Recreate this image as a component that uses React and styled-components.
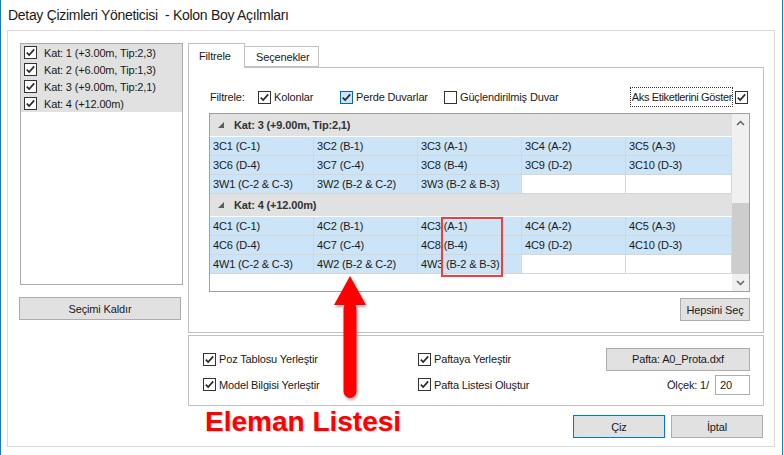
import React from 'react';
import styled, { createGlobalStyle } from 'styled-components';

const GlobalStyle = createGlobalStyle`
  html, body { margin: 0; padding: 0; background: #fff; }
  body {
    font-family: "Liberation Sans", Arial, sans-serif;
    font-size: 11px;
    letter-spacing: -0.15px;
    color: #000;
  }
`;

const floors = [
  'Kat: 1 (+3.00m, Tip:2,3)',
  'Kat: 2 (+6.00m, Tip:1,3)',
  'Kat: 3 (+9.00m, Tip:2,1)',
  'Kat: 4 (+12.00m)',
];

const groups = [
  {
    title: 'Kat: 3 (+9.00m, Tip:2,1)',
    items: ['3C1 (C-1)', '3C2 (B-1)', '3C3 (A-1)', '3C4 (A-2)', '3C5 (A-3)',
      '3C6 (D-4)', '3C7 (C-4)', '3C8 (B-4)', '3C9 (D-2)', '3C10 (D-3)',
      '3W1 (C-2 & C-3)', '3W2 (B-2 & C-2)', '3W3 (B-2 & B-3)', '', ''],
  },
  {
    title: 'Kat: 4 (+12.00m)',
    items: ['4C1 (C-1)', '4C2 (B-1)', '4C3 (A-1)', '4C4 (A-2)', '4C5 (A-3)',
      '4C6 (D-4)', '4C7 (C-4)', '4C8 (B-4)', '4C9 (D-2)', '4C10 (D-3)',
      '4W1 (C-2 & C-3)', '4W2 (B-2 & C-2)', '4W3 (B-2 & B-3)', '', ''],
  },
];

const Check = ({ checked, hover }) => (
  <CheckBox $hover={hover}>
    {checked && (
      <svg width="11" height="11" viewBox="0 0 11 11">
        <path d="M1.8 5.6 L4.2 8.1 L9.2 2.4" fill="none" stroke="#2b2b2b" strokeWidth="1.7" />
      </svg>
    )}
  </CheckBox>
);

const App = () => {
  return (
    <Window>
      <GlobalStyle />
      <TitleBar>Detay Çizimleri Yöneticisi  - Kolon Boy Açılmları</TitleBar>
      <Panel>
        <LeftColumn>
          <FloorList>
            {floors.map((f) => (
              <FloorItem key={f}>
                <Check checked />
                <span>{f}</span>
              </FloorItem>
            ))}
          </FloorList>
          <Button $w="162px" $offset="-1px">Seçimi Kaldır</Button>
        </LeftColumn>

        <RightColumn>
          <TabStrip>
            <Tab $active>Filtrele</Tab>
            <Tab>Seçenekler</Tab>
          </TabStrip>
          <TabPage>
            <FilterRow>
              <FilterLabel>Filtrele:</FilterLabel>
              <CheckItem $w="82px"><Check checked />Kolonlar</CheckItem>
              <CheckItem $w="104px"><Check checked hover />Perde Duvarlar</CheckItem>
              <CheckItem><Check />Güçlendirilmiş Duvar</CheckItem>
              <AksItem>
                <FocusText>Aks Etiketlerini Göster</FocusText>
                <Check checked />
              </AksItem>
            </FilterRow>

            <Grid>
              <GridBody>
                {groups.map((g) => (
                  <React.Fragment key={g.title}>
                    <GroupHeader>
                      <svg width="6" height="6" viewBox="0 0 6 6">
                        <polygon points="6,0 6,6 0,6" fill="#5c5c5c" />
                      </svg>
                      <span>{g.title}</span>
                    </GroupHeader>
                    <CellGrid>
                      {g.items.map((it, i) => (
                        <Cell key={i} $empty={!it}>{it}</Cell>
                      ))}
                    </CellGrid>
                  </React.Fragment>
                ))}
              </GridBody>
              <ScrollBar>
                <ScrollButton>
                  <svg width="9" height="6" viewBox="0 0 9 6">
                    <path d="M1 5 L4.5 1.5 L8 5" fill="none" stroke="#606060" strokeWidth="1.5" />
                  </svg>
                </ScrollButton>
                <ScrollTrack>
                  <ScrollThumb />
                </ScrollTrack>
                <ScrollButton>
                  <svg width="9" height="6" viewBox="0 0 9 6">
                    <path d="M1 1 L4.5 4.5 L8 1" fill="none" stroke="#606060" strokeWidth="1.5" />
                  </svg>
                </ScrollButton>
              </ScrollBar>
            </Grid>

            <PageButtons>
              <Button $w="70px">Hepsini Seç</Button>
            </PageButtons>
          </TabPage>

          <GroupBox>
            <CheckItem><Check checked />Poz Tablosu Yerleştir</CheckItem>
            <CheckItem><Check checked />Paftaya Yerleştir</CheckItem>
            <Button $w="144px">Pafta: A0_Prota.dxf</Button>
            <CheckItem><Check checked />Model Bilgisi Yerleştir</CheckItem>
            <CheckItem><Check checked />Pafta Listesi Oluştur</CheckItem>
            <ScaleRow>
              <span>Ölçek: 1/</span>
              <TextInput>20</TextInput>
            </ScaleRow>
          </GroupBox>

          <DialogButtons>
            <Button $w="92px" $default>Çiz</Button>
            <Button $w="92px">İptal</Button>
          </DialogButtons>
        </RightColumn>
      </Panel>

      <Highlight />
      <Arrow viewBox="0 0 40 130" width="40" height="130">
        <defs>
          <filter id="sh" x="-50%" y="-20%" width="200%" height="140%">
            <feDropShadow dx="1" dy="2" stdDeviation="1.5" floodColor="#000" floodOpacity="0.35" />
          </filter>
        </defs>
        <g filter="url(#sh)">
          <polygon points="20,2 36,31 4,31" fill="#ff0000" />
          <rect x="13.5" y="28" width="13" height="96" rx="6.5" fill="#ff0000" />
        </g>
      </Arrow>
      <Label>Eleman Listesi</Label>
    </Window>
  );
};

export default App;

const Window = styled.div`
  position: relative;
  width: 781px;
  height: 455px;
  border-left: 1px solid #1979ca;
  border-right: 1px solid #1979ca;
  background: #fff;
  overflow: hidden;
`;

const TitleBar = styled.div`
  height: 30px;
  padding-left: 7px;
  display: flex;
  align-items: center;
  font-size: 14px;
  letter-spacing: -0.3px;
  color: #1a1a1a;
  white-space: pre;
`;

const Panel = styled.div`
  margin-left: 6px;
  width: 768px;
  height: 417px;
  border: 1px solid #dadada;
  padding: 12px 0 0 12px;
  box-sizing: border-box;
  display: flex;
  gap: 5px;
`;

const LeftColumn = styled.div`
  width: 163px;
  display: flex;
  flex-direction: column;
`;

const FloorList = styled.div`
  height: 242px;
  border: 1px solid #ababab;
  box-sizing: border-box;
  background: #fff;
`;

const FloorItem = styled.div`
  height: 17px;
  display: flex;
  align-items: center;
  gap: 7px;
  padding-left: 3px;
  background: #e1e1e1;
  color: #1a1a1a;
`;

const CheckBox = styled.span`
  width: 13px;
  height: 13px;
  box-sizing: border-box;
  border: 1px solid ${(p) => (p.$hover ? '#0a64ad' : '#333')};
  background: ${(p) => (p.$hover ? '#cce4f7' : '#fff')};
  display: inline-flex;
  align-items: center;
  justify-content: center;
  flex: none;
`;

const Button = styled.div`
  width: ${(p) => p.$w};
  margin-left: ${(p) => p.$offset || '0'};
  height: 23px;
  box-sizing: border-box;
  border: 1px solid ${(p) => (p.$default ? '#0078d7' : '#adadad')};
  background: #e1e1e1;
  display: flex;
  align-items: center;
  justify-content: center;
  color: #1a1a1a;
  ${LeftColumn} & {
    margin-top: 12px;
  }
`;

const RightColumn = styled.div`
  width: 576px;
  display: flex;
  flex-direction: column;
`;

const TabStrip = styled.div`
  display: flex;
  height: 24px;
  align-items: flex-end;
  position: relative;
  z-index: 1;
`;

const Tab = styled.div`
  box-sizing: border-box;
  height: ${(p) => (p.$active ? '25px' : '21px')};
  margin-bottom: ${(p) => (p.$active ? '-1px' : '0')};
  padding: 0 ${(p) => (p.$active ? '10px' : '11px')};
  border: 1px solid #c2c2c2;
  border-bottom: ${(p) => (p.$active ? 'none' : '1px solid #c2c2c2')};
  border-left: ${(p) => (p.$active ? '1px solid #c2c2c2' : 'none')};
  background: #fff;
  display: flex;
  align-items: ${(p) => (p.$active ? 'flex-start' : 'center')};
  padding-top: ${(p) => (p.$active ? '6px' : '0')};
  color: #1a1a1a;
  width: ${(p) => (p.$active ? '57px' : '74px')};
`;

const TabPage = styled.div`
  height: 266px;
  box-sizing: border-box;
  border: 1px solid #c2c2c2;
  padding: 20px 13px 0 20px;
  display: flex;
  flex-direction: column;
`;

const FilterRow = styled.div`
  height: 18px;
  display: flex;
  align-items: center;
  padding-left: 1px;
  padding-right: 2px;
  color: #1a1a1a;
`;

const FilterLabel = styled.span`
  width: 48px;
`;

const CheckItem = styled.div`
  ${(p) => (p.$w ? `width: ${p.$w};` : '')}
  display: flex;
  align-items: center;
  gap: 3px;
  white-space: nowrap;
  color: #1a1a1a;
`;

const AksItem = styled.div`
  margin-left: auto;
  display: flex;
  align-items: center;
  gap: 3px;
`;

const FocusText = styled.span`
  outline: 1px dotted #333;
  padding: 2px 0 2px 1px;
  line-height: 14px;
  letter-spacing: -0.35px;
`;

const Grid = styled.div`
  margin-top: 7px;
  height: 179px;
  box-sizing: border-box;
  border: 1px solid #a0a0a0;
  display: flex;
  background: #fff;
`;

const GridBody = styled.div`
  flex: 1;
  display: flex;
  flex-direction: column;
`;

const GroupHeader = styled.div`
  height: 22px;
  border-bottom: 1px solid #fff;
  background: #e1e1e1;
  display: flex;
  align-items: center;
  gap: 10px;
  padding-left: 8px;
  font-weight: bold;
  color: #333;
`;

const CellGrid = styled.div`
  display: grid;
  grid-template-columns: 104px 104px 104px 104px 1fr;
`;

const Cell = styled.div`
  height: 18px;
  line-height: 18px;
  padding-left: 3px;
  border-right: 1px solid #d6d6d6;
  border-bottom: 1px solid #d6d6d6;
  background: ${(p) => (p.$empty ? '#fff' : '#cce4f7')};
  white-space: nowrap;
  overflow: hidden;
  color: #1a1a1a;
`;

const ScrollBar = styled.div`
  width: 17px;
  display: flex;
  flex-direction: column;
  background: #f0f0f0;
`;

const ScrollButton = styled.div`
  height: 17px;
  display: flex;
  align-items: center;
  justify-content: center;
`;

const ScrollTrack = styled.div`
  flex: 1;
  display: flex;
  flex-direction: column;
  justify-content: flex-end;
`;

const ScrollThumb = styled.div`
  height: 71px;
  background: #cdcdcd;
`;

const PageButtons = styled.div`
  margin-top: 6px;
  display: flex;
  justify-content: flex-end;
`;

const GroupBox = styled.div`
  margin-top: 2px;
  height: 71px;
  box-sizing: border-box;
  border: 1px solid #c2c2c2;
  padding: 12px 14px 0 14px;
  display: grid;
  grid-template-columns: 215px 188px 1fr;
  grid-template-rows: 22px 21px;
  row-gap: 4px;
  align-items: center;
  justify-items: start;
  & > :nth-child(3),
  & > :nth-child(6) {
    justify-self: end;
  }
`;

const ScaleRow = styled.div`
  display: flex;
  align-items: center;
  gap: 6px;
  color: #1a1a1a;
`;

const TextInput = styled.div`
  width: 35px;
  height: 20px;
  box-sizing: border-box;
  border: 1px solid #adadad;
  background: #fff;
  padding-left: 4px;
  display: flex;
  align-items: center;
`;

const DialogButtons = styled.div`
  margin-top: 9px;
  display: flex;
  justify-content: flex-end;
  gap: 6px;
  padding-right: 1px;
`;

const Highlight = styled.div`
  position: absolute;
  left: 440px;
  top: 217px;
  width: 62px;
  height: 60px;
  box-sizing: border-box;
  border: 2.5px solid #f43c3c;
`;

const Arrow = styled.svg`
  position: absolute;
  left: 329px;
  top: 274px;
`;

const Label = styled.div`
  position: absolute;
  left: 204px;
  top: 406px;
  font-family: "Liberation Sans", Arial, sans-serif;
  font-weight: bold;
  font-size: 28px;
  letter-spacing: 0;
  color: #ff0000;
  text-shadow: 1px 1px 1px rgba(0, 0, 0, 0.25);
  white-space: nowrap;
`;
